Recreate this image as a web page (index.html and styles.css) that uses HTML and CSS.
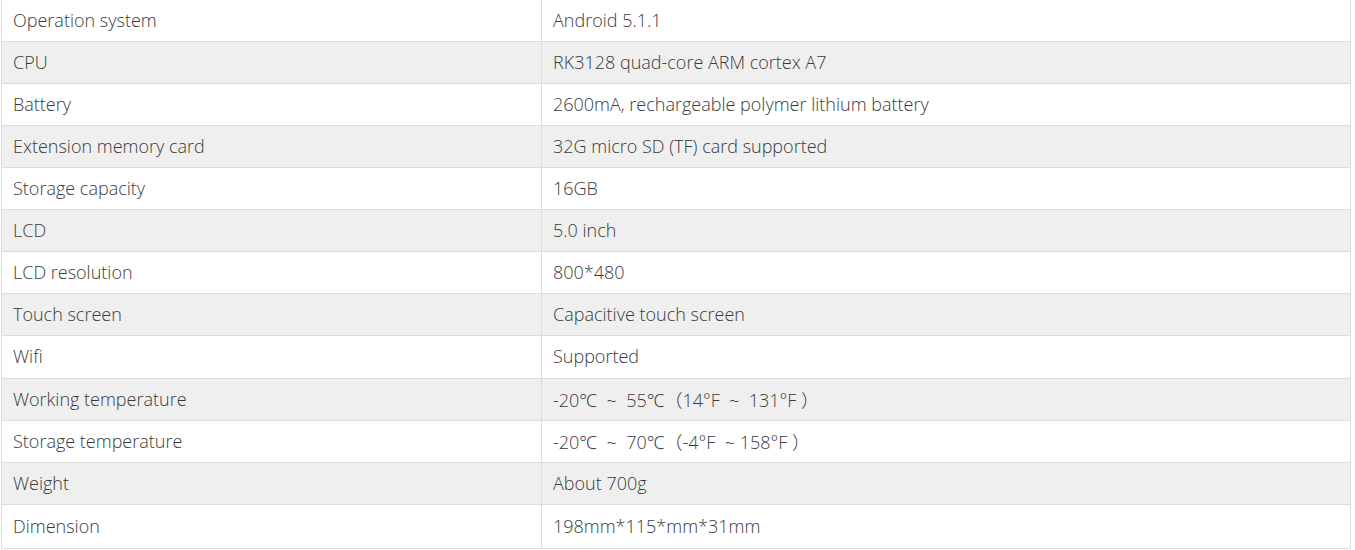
FILE: index.html
```html
<!DOCTYPE html>
<html>
<head>
<meta charset="utf-8">
<link rel="stylesheet" href="styles.css">
</head>
<body>
<table class="spec">
  <colgroup><col class="c1"><col class="c2"></colgroup>
  <tbody>
    <tr><td>Operation system</td><td>Android 5.1.1</td></tr>
    <tr><td>CPU</td><td>RK3128 quad-core ARM cortex A7</td></tr>
    <tr><td>Battery</td><td>2600mA, rechargeable polymer lithium battery</td></tr>
    <tr><td>Extension memory card</td><td>32G micro SD (TF) card supported</td></tr>
    <tr><td>Storage capacity</td><td>16GB</td></tr>
    <tr><td>LCD</td><td>5.0 inch</td></tr>
    <tr><td>LCD resolution</td><td>800*480</td></tr>
    <tr><td>Touch screen</td><td>Capacitive touch screen</td></tr>
    <tr class="tall"><td>Wifi</td><td>Supported</td></tr>
    <tr><td>Working temperature</td><td>-20℃&nbsp; ~&nbsp; 55℃（14°F&nbsp; ~&nbsp; 131°F ）</td></tr>
    <tr><td>Storage temperature</td><td>-20℃&nbsp; ~&nbsp; 70℃（-4°F&nbsp; ~ 158°F ）</td></tr>
    <tr><td>Weight</td><td>About 700g</td></tr>
    <tr class="last"><td>Dimension</td><td>198mm*115*mm*31mm</td></tr>
  </tbody>
</table>
</body>
</html>
```

FILE: styles.css
```css
html, body {
  margin: 0;
  padding: 0;
  background: #fff;
}
.spec {
  border-collapse: collapse;
  table-layout: fixed;
  width: 1349px;
  margin: -1px 0 0 1px;
  font-family: "Open Sans", "Noto Sans", "Noto Sans CJK SC", sans-serif;
  font-weight: 300;
  font-size: 18px;
  color: #3a3a3a;
}
.spec .c1 { width: 540px; }
.spec .c2 { width: 809px; }
.spec td {
  border: 1px solid #dcdcdc;
  padding: 0 11px 2px;
  box-sizing: border-box;
  height: 42px;
  vertical-align: middle;
  white-space: nowrap;
}
.spec tr:nth-child(even) td {
  background: #efefef;
}
.spec tr.tall td {
  height: 43px;
}
.spec tr.last td {
  height: 44px;
}
```
